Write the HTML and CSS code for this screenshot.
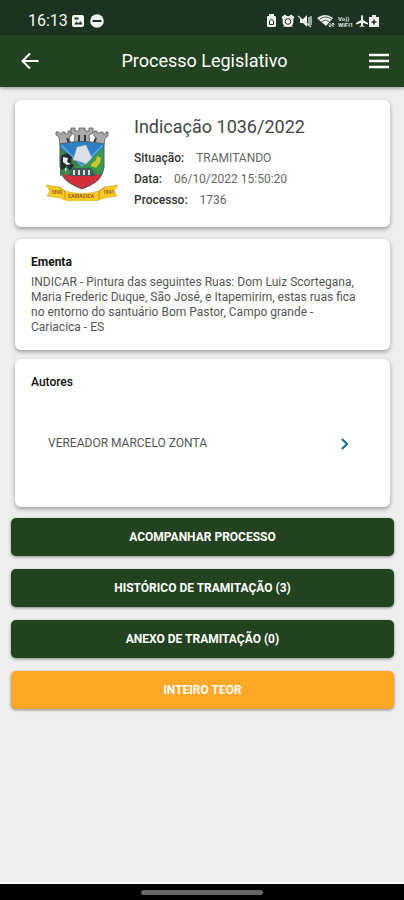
FILE: index.html
```html
<!DOCTYPE html>
<html lang="pt-BR">
<head>
<meta charset="utf-8">
<meta name="viewport" content="width=device-width, initial-scale=1">
<title>Processo Legislativo</title>
<link rel="stylesheet" href="styles.css">
</head>
<body>
<div class="status">
  <time class="clock">16:13</time>
  <svg class="status-left" width="34" height="14" viewBox="0 0 34 14" aria-hidden="true">
    <rect x="1" y="1" width="12" height="12" rx="2" fill="#f4f6f3"/>
    <path d="M3 10.5 5.5 7.500 7.500 9.500 9.300 7 11.500 10.500ZM3.500 3.500h4v2h-4z" fill="#1b3320"/>
    <circle cx="26" cy="7" r="6.800" fill="#f4f6f3"/>
    <path d="M21.500 7h9" stroke="#1b3320" stroke-width="2"/>
  </svg>
  <svg class="status-right" width="116" height="14" viewBox="0 0 116 14" aria-hidden="true">
    <g fill="#eef1ed">
      <path d="M4 2h1V0h5v2h1q1 0 1 1v9q0 1-1 1H4q-1 0-1-1V3q0-1 1-1Z"/>
      <path d="M17.500 3 21 .5 23 2.500 19 6ZM30.500 3 27 .5 25 2.500 29 6Z"/>
      <path d="m19 13 2-3 2 2ZM29 13l-2-3-2 2Z"/>
      <circle cx="24" cy="7.500" r="5.500"/>
      <path d="M36 5h3l4-4v12l-4-4h-3Z"/>
      <path d="M53 4q8-6 16 0l-7 8Z"/>
      <path d="M98 1q1 0 1 2v3l5 3v1.500L99 9v2.500l1.500 1V13L98 12.500 95.500 13v-.5l1.500-1V9l-5 1.500V9l5-3V3q0-2 1-2Z"/>
      <path d="M105 3h3V1h4v2h3v10h-10Z"/>
    </g>
    <g fill="none" stroke="#1b3320">
      <path d="M5.500 10.500V7l2-2 2 2v3.500Z"/>
      <circle cx="24" cy="7.500" r="2.800"/>
      <path d="M56 5q6-4 11 0M58 7.500q4-3 7 0" stroke-width=".8"/>
    </g>
    <path d="M34 2 47 13M45 3v9M47 2v9" fill="none" stroke="#dde2dc" stroke-width="1.300"/>
    <path d="M66 9v4m-1.500-1.500L66 13l1.500-1.500M69 13V9m-1.500 1.500L69 9l1.500 1.500" fill="none" stroke="#eef1ed"/>
    <text class="volte" x="74" y="6.500">Vo))</text>
    <text class="volte" x="74" y="13">WiFi1</text>
    <path d="M107.500 8h5M110 5.500v5" stroke="#1b3320" stroke-width="1.500"/>
  </svg>
</div>
<header class="bar">
  <button class="icon-button" type="button" aria-label="Voltar">
    <svg width="20" height="20" viewBox="0 0 20 20" fill="none" stroke="#fff" stroke-width="2"><path d="M18.500 10H3M10 2.500 2.500 10 10 17.500"/></svg>
  </button>
  <h1>Processo Legislativo</h1>
  <button class="icon-button" type="button" aria-label="Menu">
    <svg width="20" height="20" viewBox="0 0 20 20" stroke="#fff" stroke-width="2.500"><path d="M0 4h20M0 10h20M0 16h20"/></svg>
  </button>
</header>
<main>
  <section class="card summary">
    <svg class="crest" width="74" height="76" viewBox="0 0 74 76" role="img" aria-label="Brasão municipal">
      <g fill="#aaa" stroke="#555" stroke-width=".8">
        <path d="M11 7h3v2h3V7h3v2h3V6h3v5l-2 1 2 8H15l-1-8-3-2Z"/>
        <path d="M49 6h3v2h3V7h3v2h3V7h2v4l-3 2-1 7H49l2-8-2-1Z"/>
        <path d="M26 3h4v3h4V3h6v3h4V3h4v5l-4 2 1 9H29l1-9-4-2Z"/>
      </g>
      <path d="M22 13l2 5M51 13l-2 5M34 10v7M40 10v7" stroke="#333" stroke-width="2"/>
      <path d="M15 19q22-5 44 0v23q-1 14-22 22Q16 56 15 42Z" fill="#2f7fc4"/>
      <path d="M15 22 37 42 15 51Z" fill="#39804b"/>
      <path d="M59 22 37 42 58 48Z" fill="#3b9b4d"/>
      <path d="M16 49 37 39 58 48Q54 58 37 64 20 58 16 49Z" fill="#399051"/>
      <path d="M16 20 37 41 58 20" fill="none" stroke="#58aedb" stroke-width="1.500"/>
      <path d="m32 22 9-2 6 13-6 6-8-3-5-1Z" fill="#d9e0ea" stroke="#8ea5c1" stroke-width=".6"/>
      <path d="M16 31 22 28l5 4-1 6 3 2-4 6-3-5-5 4-2-5Z" fill="#252c2e"/>
      <path d="m18 32 5 1-1 4 4 2-4 1-4-3ZM20 43l2 1-2 3Z" fill="#eee"/>
      <path d="m46 39 5-4 1-4 4 2-1 5-4 5-5-2Z" fill="#c9c633"/>
      <path d="M17 50q20-4 40 0Q53 59 37 64 21 59 17 50Z" fill="#d52e38"/>
      <path d="m23 51 5-8h18l5 8Z" fill="#45595a"/>
      <path d="M29 50v-5m5 5v-5m5 5v-5m5 5v-5" stroke="#d8e0dc" stroke-width="2"/>
      <path d="M15 19q22-5 44 0v23q-1 14-22 22Q16 56 15 42Z" fill="none" stroke="#476164"/>
      <path d="m1 60 13 2 6 4q17 5 34 0l6-4 13-2-4 6 3 5-13 2-5 2q-17 4-34 0l-5-2-13-2 3-5Z" fill="#f9cb22" stroke="#d1a52b" stroke-width=".6"/>
      <path d="m14 62 6 4v8m40-12-6 4v8" fill="none" stroke="#b77e20" stroke-width=".8"/>
      <text class="motto" x="6" y="69">1890</text>
      <text class="motto" x="23" y="73">CARIACICA</text>
      <text class="motto" x="58" y="69">1891</text>
    </svg>
    <div class="details">
      <h2>Indicação 1036/2022</h2>
      <dl>
        <div><dt>Situação:</dt><dd>TRAMITANDO</dd></div>
        <div><dt>Data:</dt><dd>06/10/2022 15:50:20</dd></div>
        <div><dt>Processo:</dt><dd>1736</dd></div>
      </dl>
    </div>
  </section>
  <section class="card ementa">
    <h3>Ementa</h3>
    <p>INDICAR - Pintura das seguintes Ruas: Dom Luiz Scortegana, Maria Frederic Duque, São José, e Itapemirim, estas ruas fica no entorno do santuário Bom Pastor, Campo grande - Cariacica - ES</p>
  </section>
  <section class="card autores">
    <h3>Autores</h3>
    <a class="author" href="#autor">
      <span>VEREADOR MARCELO ZONTA</span>
      <svg width="10" height="14" viewBox="0 0 10 14" fill="none" stroke="#146894" stroke-width="2" aria-hidden="true"><path d="m2 2 5 5-5 5"/></svg>
    </a>
  </section>
  <div class="actions">
    <button type="button">ACOMPANHAR PROCESSO</button>
    <button type="button">HISTÓRICO DE TRAMITAÇÃO (3)</button>
    <button type="button">ANEXO DE TRAMITAÇÃO (0)</button>
    <button type="button" class="primary">INTEIRO TEOR</button>
  </div>
</main>
<footer class="gesture"><div class="handle"></div></footer>
</body>
</html>
```
FILE: styles.css
```css
* { box-sizing: border-box; }
body {
  margin: 0;
  min-height: 100vh;
  display: flex;
  flex-direction: column;
  background: #eee;
  color: #555;
  font: 12px/15px Roboto, sans-serif;
}
h1, h2, h3, p, dl, dd { margin: 0; }
button { border: 0; padding: 0; font: inherit; color: #fff; cursor: pointer; }
svg { display: block; flex: none; }
.status {
  display: flex;
  align-items: center;
  height: 35px;
  padding: 6px 24px 0 28px;
  background: #1b3320;
  color: #f4f6f3;
}
.clock { font-size: 16px; line-height: 20px; }
.status-left { margin-left: 3px; }
.status-right { margin-left: auto; }
.volte { font: 700 6px Roboto, sans-serif; fill: #dde2dc; }
.bar {
  display: flex;
  align-items: center;
  justify-content: space-between;
  height: 52px;
  padding: 0 15px 0 20px;
  background: #234220;
  color: #fff;
  box-shadow: 0 1px 4px rgba(0, 0, 0, .4);
}
.bar h1 { font-size: 18px; line-height: 24px; font-weight: 400; }
.icon-button { background: none; }
main { flex: 1; padding: 13px 10px 0 11px; }
.card {
  margin: 0 4px;
  padding: 16px 16px 15px;
  background: #fff;
  border-radius: 6px;
  box-shadow: 0 2px 4px rgba(0, 0, 0, .35);
}
.summary { display: flex; min-height: 127px; padding-left: 30px; }
.crest { margin-top: 9px; }
.motto { font: 700 5px Roboto, sans-serif; fill: #96571d; }
.details { margin-left: 15px; }
.details h2 { color: #444; font-size: 18px; line-height: 22px; font-weight: 400; margin-bottom: 10px; }
dl div { display: flex; gap: 12px; line-height: 21px; }
dt { color: #333; font-weight: 500; }
dd { color: #666; }
.ementa { margin-top: 12px; }
h3 { color: #111; font-size: 12px; line-height: 15px; font-weight: 700; }
.ementa p { margin-top: 5px; padding-right: 8px; }
.autores { margin-top: 9px; min-height: 148px; }
.autores h3 { font-weight: 500; }
.author {
  display: flex;
  align-items: center;
  justify-content: space-between;
  margin-top: 46px;
  padding: 0 24px 0 17px;
  color: #555;
  text-decoration: none;
}
.actions { display: grid; gap: 13px; margin: 11px 0; }
.actions button {
  height: 38px;
  border-radius: 5px;
  background: #234220;
  font-size: 12px;
  font-weight: 700;
  box-shadow: 0 1px 3px rgba(0, 0, 0, .45);
}
.actions .primary { background: #ffa827; }
.gesture {
  display: flex;
  align-items: center;
  justify-content: center;
  height: 18px;
  border-top: 2px solid #fff;
  background: #000;
}
.handle { width: 30%; height: 5px; border-radius: 3px; background: #666; }
```
